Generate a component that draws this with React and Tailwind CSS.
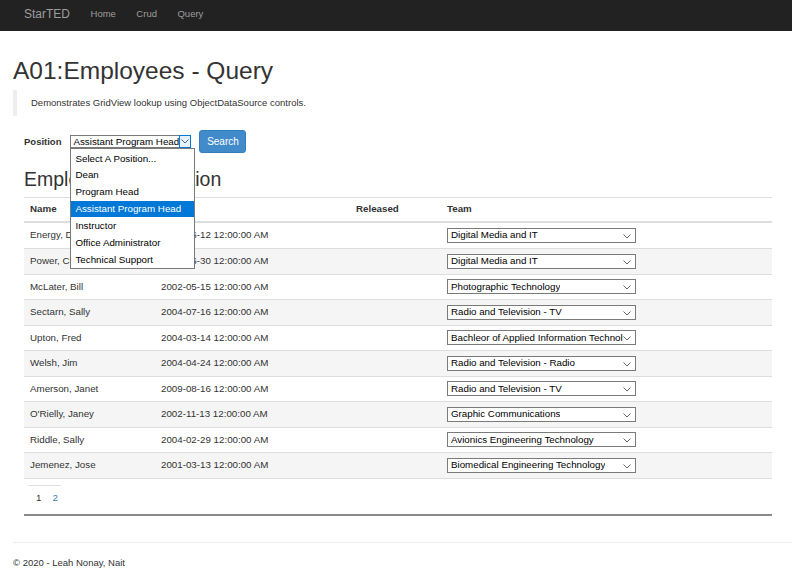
import React from "react";

const rows = [
  ["Energy, Dawn", "2006-06-12 12:00:00 AM", "Digital Media and IT"],
  ["Power, Chris", "2006-06-30 12:00:00 AM", "Digital Media and IT"],
  ["McLater, Bill", "2002-05-15 12:00:00 AM", "Photographic Technology"],
  ["Sectarn, Sally", "2004-07-16 12:00:00 AM", "Radio and Television - TV"],
  ["Upton, Fred", "2004-03-14 12:00:00 AM", "Bachleor of Applied Information Technology"],
  ["Welsh, Jim", "2004-04-24 12:00:00 AM", "Radio and Television - Radio"],
  ["Amerson, Janet", "2009-08-16 12:00:00 AM", "Radio and Television - TV"],
  ["O'Rielly, Janey", "2002-11-13 12:00:00 AM", "Graphic Communications"],
  ["Riddle, Sally", "2004-02-29 12:00:00 AM", "Avionics Engineering Technology"],
  ["Jemenez, Jose", "2001-03-13 12:00:00 AM", "Biomedical Engineering Technology"],
];

const options = [
  "Select A Position...",
  "Dean",
  "Program Head",
  "Assistant Program Head",
  "Instructor",
  "Office Administrator",
  "Technical Support",
];

function Chevron({ className = "" }) {
  return (
    <svg width="8" height="5" viewBox="0 0 8 5" className={className}>
      <path d="M0.5 0.5 L4 4 L7.5 0.5" fill="none" stroke="#666" strokeWidth="1" />
    </svg>
  );
}

function TeamSelect({ value }) {
  return (
    <div className="relative w-[189px] h-[15px] border border-[#7a7a7a] bg-white flex items-center pl-[3px] pr-[12px] overflow-hidden">
      <span className="whitespace-nowrap overflow-hidden text-[9.75px] text-black leading-none">{value}</span>
      <Chevron className="absolute right-[4px] top-[5px]" />
    </div>
  );
}

export default function App() {
  return (
    <div className="min-h-[576px] bg-white text-[#333]" style={{ fontFamily: '"Liberation Sans", Arial, sans-serif' }}>
      {/* Navbar */}
      <div className="h-[31px] bg-[#222] flex items-center pl-[24px] pb-[3px] gap-[20.5px]">
        <span className="text-[12px] text-[#9d9d9d] leading-none">StarTED</span>
        <span className="text-[9.5px] text-[#9d9d9d] leading-none">Home</span>
        <span className="text-[9.5px] text-[#9d9d9d] leading-none">Crud</span>
        <span className="text-[9.5px] text-[#9d9d9d] leading-none">Query</span>
      </div>

      <div className="px-[13px]">
        <h1 className="mt-[26px] text-[24.5px] leading-[27px] text-[#333]">A01:Employees - Query</h1>
        <div className="mt-[6px] h-[26px] border-l-[4px] border-[#eee] pl-[14px] flex items-center">
          <span className="text-[9.5px] leading-none text-[#333]">Demonstrates GridView lookup using ObjectDataSource controls.</span>
        </div>

        <div className="ml-[11px] w-[748px]">
          {/* Position row */}
          <div className="mt-[14px] h-[23px] flex items-center">
            <span className="text-[9.5px] font-bold leading-none text-[#333]">Position</span>
            <div className="relative ml-[9px] w-[121px] h-[13px] border border-[#7a7a7a] bg-white flex items-center pl-[2px]">
              <span className="text-[9.75px] leading-none text-black whitespace-nowrap">Assistant Program Head</span>
              <div className="absolute right-[-1px] top-[-1px] w-[12px] h-[13px] border border-[#0078d7] bg-[#e5f1fb] flex items-center justify-center">
                <Chevron />
              </div>
              {/* Open dropdown list */}
              <div className="absolute left-[-1px] top-[12px] w-[125px] h-[121px] border border-[#7a7a7a] bg-white z-10 flex flex-col pt-px">
                {options.map((o) => (
                  <div
                    key={o}
                    className={
                      "h-[17.1px] flex items-center pl-[4px] text-[9.75px] leading-none whitespace-nowrap " +
                      (o === "Assistant Program Head" ? "bg-[#0078d7] text-white" : "text-black")
                    }
                  >
                    {o}
                  </div>
                ))}
              </div>
            </div>
            <div className="ml-[8px] w-[47px] h-[23px] rounded-[3px] bg-[#428bca] border border-[#357ebd] flex items-center justify-center">
              <span className="text-[10px] leading-none text-white">Search</span>
            </div>
          </div>

          <h2 className="mt-[16px] text-[19.5px] leading-[21.5px] text-[#333]">Employees by Position</h2>

          {/* Table */}
          <div className="mt-[6px] border-t border-[#ddd]">
            <div className="h-[25px] flex items-center border-b-2 border-[#ddd] text-[9.75px] font-bold leading-none text-[#333]">
              <div className="w-[131px] pl-[6px]">Name</div>
              <div className="w-[195px] pl-[6px]">Hired</div>
              <div className="w-[91px] pl-[6px]">Released</div>
              <div className="flex-1 pl-[6px]">Team</div>
            </div>
            {rows.map((r, i) => (
              <div
                key={r[0]}
                className={
                  "h-[25.5px] flex items-center text-[9.75px] leading-none text-[#333] " +
                  (i > 0 ? "border-t border-[#ddd] " : "") +
                  (i % 2 === 1 ? "bg-[#f5f5f5]" : "bg-white")
                }
              >
                <div className="w-[131px] pl-[6px] whitespace-nowrap">{r[0]}</div>
                <div className="w-[195px] pl-[6px] whitespace-nowrap">{r[1]}</div>
                <div className="w-[91px] pl-[6px]"></div>
                <div className="flex-1 pl-[6px]">
                  <TeamSelect value={r[2]} />
                </div>
              </div>
            ))}
            <div className="border-t border-[#ddd]"></div>
          </div>

          {/* Pager */}
          <div className="mt-[6px] ml-[5px] w-[32px] border-t border-[#ddd] h-[26px] flex items-center gap-[11px] pl-[7px] text-[9.75px] leading-none">
            <span className="text-[#333]">1</span>
            <span className="text-[#337ab7]">2</span>
          </div>
          <div className="mt-[3px] h-[2px] bg-[#8a8a8a]"></div>
        </div>
      </div>

      {/* Footer */}
      <div className="mt-[26px] ml-[13px] border-t border-[#eee]">
        <p className="mt-[15px] text-[9.5px] leading-none text-[#333]">© 2020 - Leah Nonay, Nait</p>
      </div>
    </div>
  );
}
